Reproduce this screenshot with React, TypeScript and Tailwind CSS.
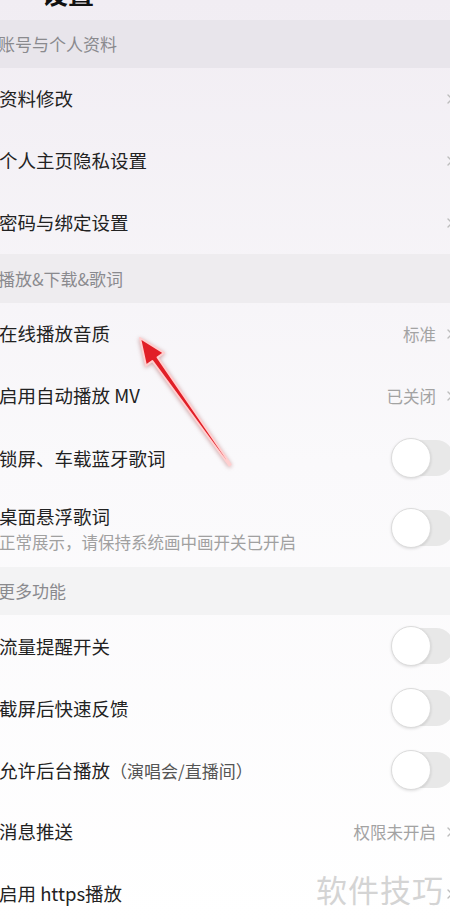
import { ChevronLeft, ChevronRight } from "lucide-react";

const font = { fontFamily: '"Noto Sans CJK SC", "Noto Sans", sans-serif' };

type Row =
  | { kind: "header"; label: string; bg: string; h: string }
  | { kind: "link"; label: string; value?: string }
  | { kind: "toggle"; label: string; sub?: string; note?: string };

const rows: Row[] = [
  { kind: "header", label: "账号与个人资料", bg: "bg-[#e8e5eb]", h: "h-[48px]" },
  { kind: "link", label: "资料修改" },
  { kind: "link", label: "个人主页隐私设置" },
  { kind: "link", label: "密码与绑定设置" },
  { kind: "header", label: "播放&下载&歌词", bg: "bg-[#eeecef]", h: "h-[49px]" },
  { kind: "link", label: "在线播放音质", value: "标准" },
  { kind: "link", label: "启用自动播放 MV", value: "已关闭" },
  { kind: "toggle", label: "锁屏、车载蓝牙歌词" },
  { kind: "toggle", label: "桌面悬浮歌词", sub: "正常展示，请保持系统画中画开关已开启" },
  { kind: "header", label: "更多功能", bg: "bg-[#f3f3f4]", h: "h-[48px]" },
  { kind: "toggle", label: "流量提醒开关" },
  { kind: "toggle", label: "截屏后快速反馈" },
  { kind: "toggle", label: "允许后台播放", note: "（演唱会/直播间）" },
  { kind: "link", label: "消息推送", value: "权限未开启" },
  { kind: "link", label: "启用 https播放" },
];

function Toggle() {
  return (
    <div className="relative h-[36px] w-[62px] rounded-full bg-[#e8e8e8]">
      <div className="absolute -left-[1px] -top-[2px] h-[40px] w-[40px] rounded-full border border-[#dcdcdc] bg-white shadow-[0_1px_3px_rgba(0,0,0,0.12)]" />
    </div>
  );
}

function SettingRow({ row }: { row: Row }) {
  if (row.kind === "header") {
    return (
      <div className={`flex items-center px-[13px] ${row.h} ${row.bg}`}>
        <span className="text-[17px] text-[#8a8a8e]">{row.label}</span>
      </div>
    );
  }
  if (row.kind === "link") {
    return (
      <div className="flex h-[62px] items-center justify-between pl-[14px] pr-[7px]">
        <span className="text-[18.5px] text-[#222]">{row.label}</span>
        <div className="flex items-center gap-[6px]">
          {row.value ? <span className="text-[16.5px] text-[#a3a3a3]">{row.value}</span> : null}
          <ChevronRight className="h-[16px] w-[16px] text-[#bdbdbd]" strokeWidth={2} />
        </div>
      </div>
    );
  }
  return (
    <div
      className={`flex items-center justify-between pl-[14px] pr-[11px] ${row.sub ? "h-[78px]" : "h-[62px]"}`}
    >
      <div className="flex flex-col">
        <span className="text-[18.5px] leading-[26px] text-[#222]">
          {row.label}
          {row.note ? <span className="text-[17px] text-[#555]">{row.note}</span> : null}
        </span>
        {row.sub ? (
          <span className="mt-[1px] text-[16.5px] leading-[24px] text-[#a0a0a0]">{row.sub}</span>
        ) : null}
      </div>
      <Toggle />
    </div>
  );
}

export default function App() {
  return (
    <div
      className="relative h-[923px] w-[450px] overflow-hidden bg-gradient-to-b from-[#f1edf3] via-[#faf9fb] to-white"
      style={font}
    >
      <div className="-ml-[15px] -mt-[36px] w-[480px]">
        <div className="flex h-[56px] items-center gap-[17px] pl-[14px]">
          <ChevronLeft className="h-[26px] w-[26px] text-[#222]" strokeWidth={2.4} />
          <span className="text-[26px] font-bold text-[#111]">设置</span>
        </div>
        {rows.map((row, i) => (
          <SettingRow key={i} row={row} />
        ))}
      </div>

      <span className="pointer-events-none absolute right-[6px] top-[866px] text-[31px] tracking-[1px] text-[#d4d4d4]">
        软件技巧
      </span>

      <svg
        className="pointer-events-none absolute left-0 top-0"
        width="450"
        height="923"
        viewBox="0 0 450 923"
      >
        <polygon
          points="140,338 164,352.8 157.6,357.4 230.7,464.5 229.3,465.5 152.4,361 146,365.6"
          fill="#e11f27"
          stroke="#ffcfcf"
          strokeWidth="2"
          strokeLinejoin="round"
          style={{ filter: "drop-shadow(0 1px 2px rgba(120,0,0,0.35))" }}
        />
      </svg>
    </div>
  );
}
